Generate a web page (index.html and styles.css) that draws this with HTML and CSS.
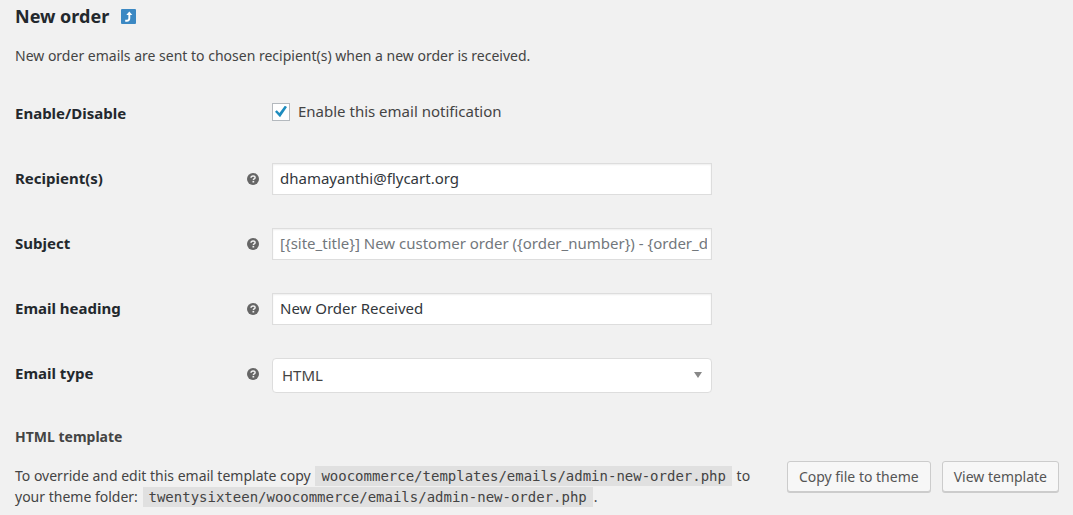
FILE: index.html
```html
<!DOCTYPE html>
<html lang="en">
<head>
<meta charset="utf-8">
<title>New order</title>
<link rel="stylesheet" href="styles.css">
</head>
<body>
<svg class="symbols" aria-hidden="true">
  <symbol id="help" viewBox="0 0 12 12"><circle cx="6" cy="6" r="6" fill="#666"/><path d="M4 4.700Q4.100 2.900 6.100 2.900T8.100 4.500Q8.100 5.400 7.100 5.900Q6.400 6.300 6.400 7" fill="none" stroke="#f1f1f1" stroke-width="1.500"/><rect x="5.500" y="7.900" width="1.700" height="1.600" fill="#f1f1f1"/></symbol>
</svg>
<main class="page">
  <h1 class="title">New order
    <a class="back" href="#" aria-label="Return to emails"><svg viewBox="0 0 15 15" width="15" height="15"><rect width="15" height="15" rx="1" fill="#3b88c3"/><path d="M4.200 11.800H5.800Q8.300 11.800 8.300 9.300V5.500" fill="none" stroke="#fff" stroke-width="1.900"/><path d="M5.300 6 8.300 2.400 11.300 6Z" fill="#fff"/></svg></a>
  </h1>
  <p class="intro">New order emails are sent to chosen recipient(s) when a new order is received.</p>
  <form class="form">
    <div class="row">
      <span class="label">Enable/Disable</span>
      <label class="check"><input class="box" type="checkbox" checked>Enable this email notification</label>
    </div>
    <div class="row">
      <label class="label" for="recipient">Recipient(s)</label>
      <svg class="help"><use href="#help"/></svg>
      <input class="field" id="recipient" type="text" value="dhamayanthi@flycart.org">
    </div>
    <div class="row">
      <label class="label" for="subject">Subject</label>
      <svg class="help"><use href="#help"/></svg>
      <input class="field" id="subject" type="text" placeholder="[{site_title}] New customer order ({order_number}) - {order_d">
    </div>
    <div class="row">
      <label class="label" for="heading">Email heading</label>
      <svg class="help"><use href="#help"/></svg>
      <input class="field" id="heading" type="text" value="New Order Received">
    </div>
    <div class="row">
      <label class="label" for="type">Email type</label>
      <svg class="help"><use href="#help"/></svg>
      <div class="picker">
        <select class="field select" id="type"><option>HTML</option></select>
        <svg class="arrow" viewBox="0 0 8 6" width="8" height="6"><path d="M0 0H8L4 6Z" fill="#888"/></svg>
      </div>
    </div>
  </form>
  <h2 class="subtitle">HTML template</h2>
  <div class="template">
    <p class="note">To override and edit this email template copy <code class="code">woocommerce/templates/emails/admin-new-order.php</code> to your theme folder: <code class="code">twentysixteen/woocommerce/emails/admin-new-order.php</code>.</p>
    <div class="actions">
      <button class="button" type="button">Copy file to theme</button>
      <button class="button" type="button">View template</button>
    </div>
  </div>
</main>
</body>
</html>
```
FILE: styles.css
```css
* { box-sizing: border-box; }
body { margin: 0; background: #f1f1f1; color: #444; font: 14px/21px "Noto Sans", sans-serif; }
.symbols { display: none; }
.page { padding: 4px 14px 4px 15px; }
.title { display: flex; align-items: center; gap: 12px; margin: 0; color: #23282d; font-size: 18px; line-height: 24px; }
.back { display: flex; }
.intro { margin: 17px 0 15px; }
.row { display: grid; grid-template-columns: 232px 25px minmax(0, 440px); align-items: center; min-height: 65px; }
.label { color: #23282d; font-size: 15px; font-weight: 700; }
.help { width: 12px; height: 12px; }
.check { grid-column: 3; display: flex; align-items: center; gap: 8px; padding-bottom: 4px; font-size: 15px; }
.box { appearance: none; width: 18px; height: 18px; margin: 0; border: 1px solid #b4b9be; background: #fff; display: grid; place-items: center; }
.box:checked::before { content: ""; width: 12px; height: 12px; background: #1e8cbe; clip-path: polygon(0 52%, 15% 40%, 37% 63%, 82% 2%, 100% 12%, 42% 98%); }
.field { width: 100%; height: 32px; border: 1px solid #ddd; border-radius: 0; background: #fff; padding: 0 4px 2px 7px; color: #32373c; font: inherit; font-size: 15px; box-shadow: inset 0 1px 2px rgba(0, 0, 0, .07); }
.field::placeholder { color: #72777c; opacity: 1; }
.picker { display: grid; grid-template-columns: 1fr; align-items: center; padding-top: 3px; }
.select { grid-area: 1 / 1; appearance: none; height: 35px; padding: 1px 8px 0 9px; border-radius: 4px; box-shadow: none; color: #444; }
.arrow { grid-area: 1 / 1; justify-self: end; margin-right: 10px; pointer-events: none; }
.subtitle { margin: 20px 0 14px; font-size: 14px; }
.template { display: flex; justify-content: space-between; align-items: flex-start; gap: 24px; }
.note { flex: 0 1 744px; margin: 0; padding-top: 4px; }
.code { margin: 0 1px; background: #e0e0e0; padding: 2px 6px; font: 14px "DejaVu Sans Mono", monospace; }
.actions { display: flex; gap: 11px; }
.button { height: 31px; padding: 0 11px; border: 1px solid #ccc; border-radius: 3px; background: #f7f7f7; color: #555; font: inherit; box-shadow: 0 1px 0 #ccc; white-space: nowrap; }
```
